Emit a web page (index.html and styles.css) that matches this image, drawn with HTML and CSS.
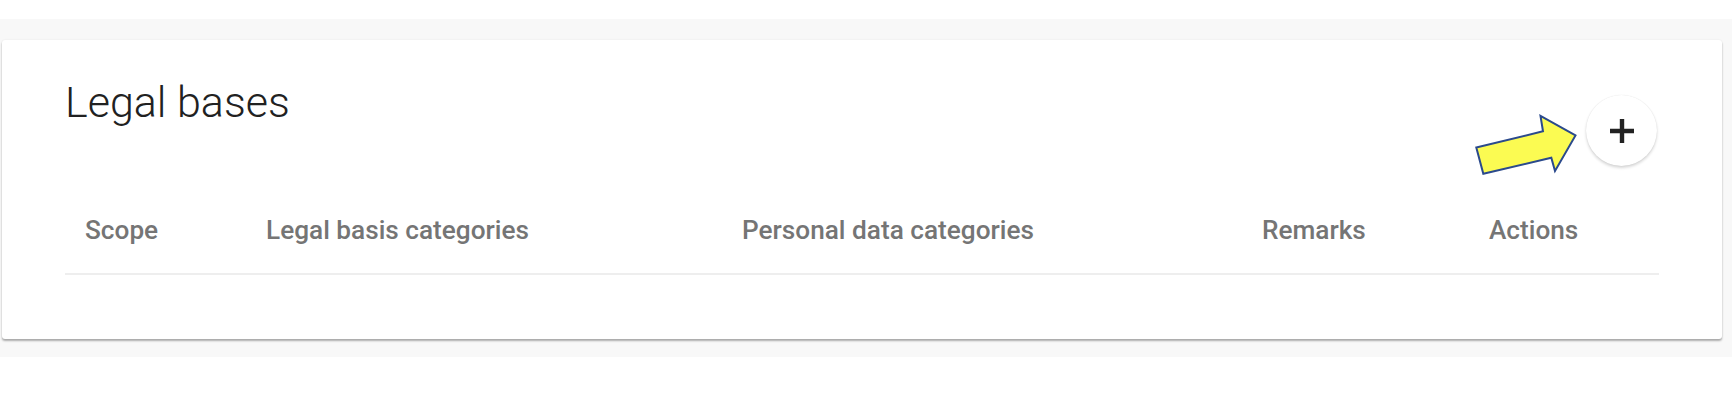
FILE: index.html
```html
<!DOCTYPE html>
<html lang="en">
<head>
<meta charset="utf-8">
<title>Legal bases</title>
<link rel="stylesheet" href="styles.css">
</head>
<body>
<div class="page">
  <div class="band">
    <section class="card">
      <div class="card-head">
        <h1 class="title">Legal bases</h1>
        <button class="fab" type="button" aria-label="Add">
          <svg class="fab-icon" viewBox="0 0 26 26" width="26" height="26">
            <path d="M13 1v24M1 13h24" stroke="#222" stroke-width="4.4" fill="none"/>
          </svg>
        </button>
      </div>
      <div class="table">
        <div class="th c1">Scope</div>
        <div class="th c2">Legal basis categories</div>
        <div class="th c3">Personal data categories</div>
        <div class="th c4">Remarks</div>
        <div class="th c5">Actions</div>
      </div>
      <svg class="pointer" viewBox="0 0 106 64" width="106" height="64" aria-hidden="true">
        <polygon points="2.3,34.5 69,18.3 66.5,2.8 101.5,22.5 81,58 77.3,44.8 9.3,60.7" fill="#fbfb52" stroke="#2b4a8c" stroke-width="2" stroke-linejoin="miter"/>
      </svg>
    </section>
  </div>
</div>
</body>
</html>
```

FILE: styles.css
```css
* { box-sizing: border-box; }

html, body {
  margin: 0;
  padding: 0;
  background: #ffffff;
  font-family: Roboto, "Liberation Sans", Arial, sans-serif;
}

.page {
  padding-top: 19px;
}

.band {
  background: #f8f8f8;
  padding: 21px 10px 18px 2px;
}

.card {
  position: relative;
  background: #ffffff;
  border-radius: 3px;
  box-shadow: 0 2px 2px rgba(0, 0, 0, 0.3), 0 0 2px rgba(0, 0, 0, 0.08);
  padding: 35px 63px 64px 63px;
}

.card-head {
  display: flex;
  justify-content: space-between;
  align-items: flex-start;
}

.title {
  margin: 0;
  font-weight: 300;
  font-size: 43px;
  line-height: 54px;
  color: #212121;
}

.fab {
  margin-top: 20px;
  margin-right: 2px;
  width: 71px;
  height: 71px;
  border-radius: 50%;
  border: none;
  background: #ffffff;
  box-shadow: 0 2px 3px rgba(0, 0, 0, 0.16), 0 0 1px rgba(0, 0, 0, 0.12);
  display: flex;
  align-items: center;
  justify-content: center;
  padding: 0;
}

.fab-icon {
  display: block;
}

.table {
  margin-top: 21px;
  display: grid;
  grid-template-columns: 181px 476px 520px 227px 1fr;
  border-bottom: 2px solid #eeeeee;
}

.th {
  padding: 28px 0 28px 20px;
  font-size: 26.2px;
  line-height: 30px;
  font-weight: 500;
  color: #757575;
  white-space: nowrap;
}

.pointer {
  position: absolute;
  left: 1472px;
  top: 73px;
}
```
